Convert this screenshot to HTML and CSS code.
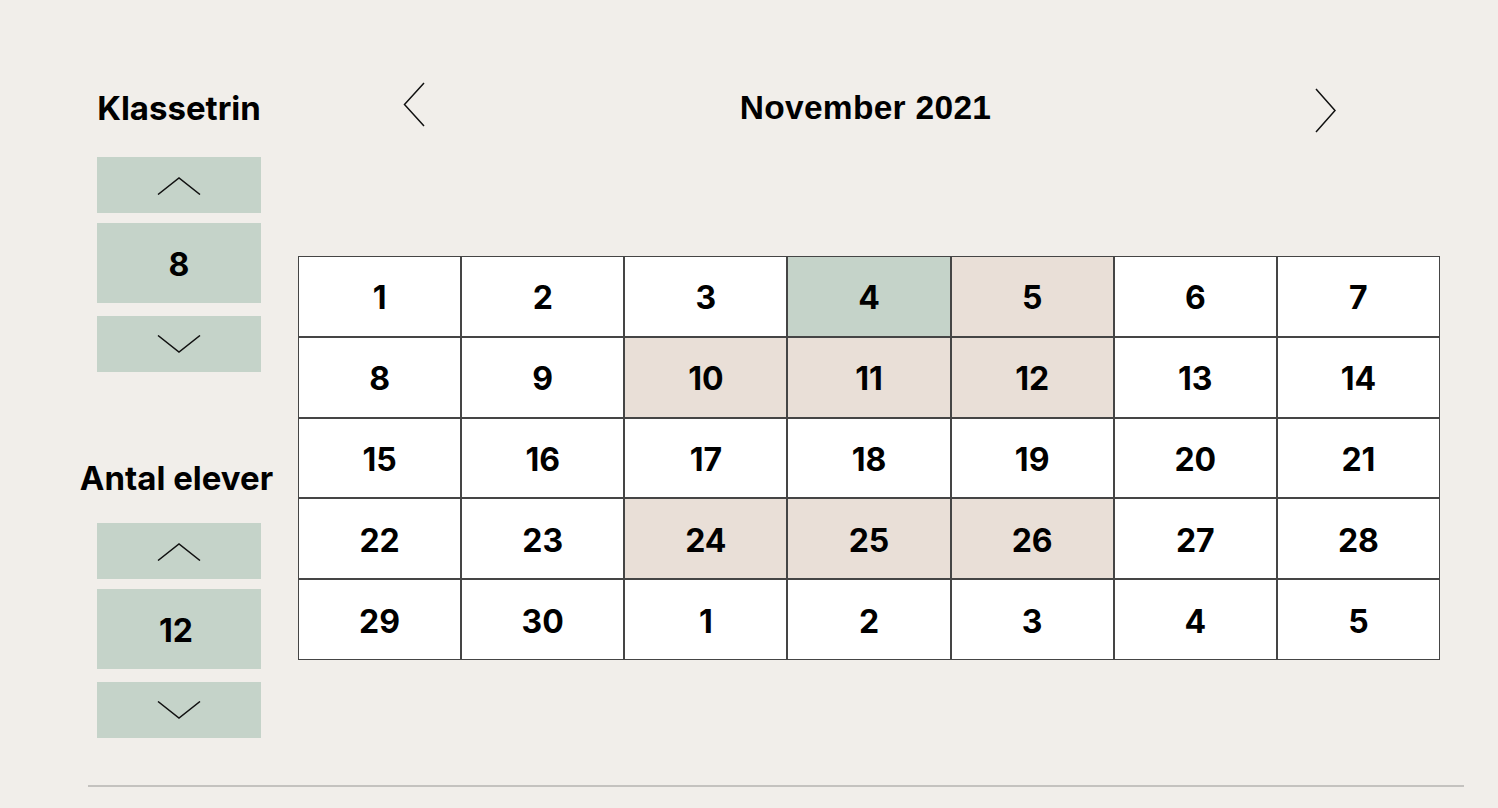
FILE: index.html
```html
<!DOCTYPE html>
<html lang="da">
<head>
<meta charset="utf-8">
<title>Kalender</title>
<link rel="stylesheet" href="styles.css">
</head>
<body>
<div class="page">
  <div class="main">
    <aside class="side">
      <div class="group group-first">
        <h2 class="label">Klassetrin</h2>
        <button class="step step-up" aria-label="Op">
          <svg width="44" height="18" viewBox="0 0 44 18"><path d="M1 17.5 L22 1 L43 17.5" fill="none" stroke="#111" stroke-width="1.5"/></svg>
        </button>
        <div class="value">8</div>
        <button class="step step-down" aria-label="Ned">
          <svg width="44" height="18" viewBox="0 0 44 18"><path d="M1 0.5 L22 17 L43 0.5" fill="none" stroke="#111" stroke-width="1.5"/></svg>
        </button>
      </div>
      <div class="group group-second">
        <h2 class="label">Antal elever</h2>
        <button class="step step-up" aria-label="Op">
          <svg width="44" height="18" viewBox="0 0 44 18"><path d="M1 17.5 L22 1 L43 17.5" fill="none" stroke="#111" stroke-width="1.5"/></svg>
        </button>
        <div class="value value-shift">12</div>
        <button class="step step-down" aria-label="Ned">
          <svg width="44" height="18" viewBox="0 0 44 18"><path d="M1 0.5 L22 17 L43 0.5" fill="none" stroke="#111" stroke-width="1.5"/></svg>
        </button>
      </div>
    </aside>
    <section class="cal">
      <div class="cal-head">
        <button class="nav nav-prev" aria-label="Forrige">
          <svg width="22" height="45" viewBox="0 0 22 45"><path d="M21 1 L1.5 22.5 L21 44" fill="none" stroke="#111" stroke-width="1.5"/></svg>
        </button>
        <h1 class="month">November 2021</h1>
        <button class="nav nav-next" aria-label="Næste">
          <svg width="22" height="45" viewBox="0 0 22 45"><path d="M1 1 L20 22.5 L1 44" fill="none" stroke="#111" stroke-width="1.5"/></svg>
        </button>
      </div>
      <div class="grid">
        <div class="day">1</div><div class="day">2</div><div class="day">3</div><div class="day today">4</div><div class="day mark">5</div><div class="day">6</div><div class="day">7</div>
        <div class="day">8</div><div class="day">9</div><div class="day mark">10</div><div class="day mark">11</div><div class="day mark">12</div><div class="day">13</div><div class="day">14</div>
        <div class="day">15</div><div class="day">16</div><div class="day">17</div><div class="day">18</div><div class="day">19</div><div class="day">20</div><div class="day">21</div>
        <div class="day">22</div><div class="day">23</div><div class="day mark">24</div><div class="day mark">25</div><div class="day mark">26</div><div class="day">27</div><div class="day">28</div>
        <div class="day">29</div><div class="day">30</div><div class="day">1</div><div class="day">2</div><div class="day">3</div><div class="day">4</div><div class="day">5</div>
      </div>
    </section>
  </div>
  <hr class="rule">
</div>
</body>
</html>
```

FILE: styles.css
```css
* { box-sizing: border-box; }
html, body {
  margin: 0;
  padding: 0;
  background: #f1eeea;
  height: 100%;
}
body {
  font-family: Inter, "Noto Sans", sans-serif;
  color: #000;
  overflow: hidden;
}
.page {
  width: 1498px;
  height: 808px;
  padding-top: 88px;
}
.main {
  display: flex;
  align-items: flex-start;
}
.side {
  width: 194px;
  margin-left: 82px;
  display: flex;
  flex-direction: column;
  align-items: center;
}
.group {
  display: flex;
  flex-direction: column;
  align-items: center;
}
.group-second { margin-top: 86px; }
.label {
  margin: 0;
  height: 40px;
  line-height: 40px;
  font-size: 33px;
  font-weight: 700;
  white-space: nowrap;
}
.group-first .label { margin-bottom: 29px; }
.group-second .label { margin-bottom: 25px; margin-right: 5px; }
.step {
  width: 164px;
  height: 56px;
  border: 0;
  padding: 0;
  margin: 0;
  background: #c5d3c9;
  display: flex;
  align-items: center;
  justify-content: center;
  cursor: pointer;
}
.step svg { display: block; }
.step-up svg { margin-top: 1px; }
.value {
  width: 164px;
  height: 80px;
  margin: 10px 0 13px;
  padding-top: 3px;
  background: #c5d3c9;
  display: flex;
  align-items: center;
  justify-content: center;
  font-size: 32px;
  font-weight: 700;
}
.value-shift { padding-right: 6px; }
.cal {
  margin-left: 22px;
  width: 1142px;
}
.cal-head {
  height: 168px;
  display: flex;
  justify-content: space-between;
  align-items: flex-start;
  padding: 0 103px 0 105px;
}
.nav {
  border: 0;
  background: none;
  padding: 0;
  margin: 0;
  cursor: pointer;
}
.nav svg { display: block; }
.nav-prev { margin-top: -6px; }
.nav-next { margin-top: 0; }
.month {
  margin: 0 9px 0 0;
  height: 40px;
  line-height: 40px;
  font-family: "Liberation Sans", Arial, sans-serif;
  font-size: 33.5px;
  letter-spacing: 0.3px;
  font-weight: 700;
}
.grid {
  display: grid;
  grid-template-columns: repeat(7, 1fr);
  grid-auto-rows: 80.8px;
}
.day {
  background: #fff;
  border: 1px solid #454545;
  display: flex;
  align-items: center;
  justify-content: center;
  padding-top: 3px;
  font-size: 32px;
  font-weight: 700;
}
.day.today { background: #c5d3c9; }
.day.mark { background: #e9dfd7; }
.rule {
  margin: 47px 0 0 88px;
  width: 1376px;
  border: 0;
  height: 2px;
  background: #c4c2bf;
}
```
